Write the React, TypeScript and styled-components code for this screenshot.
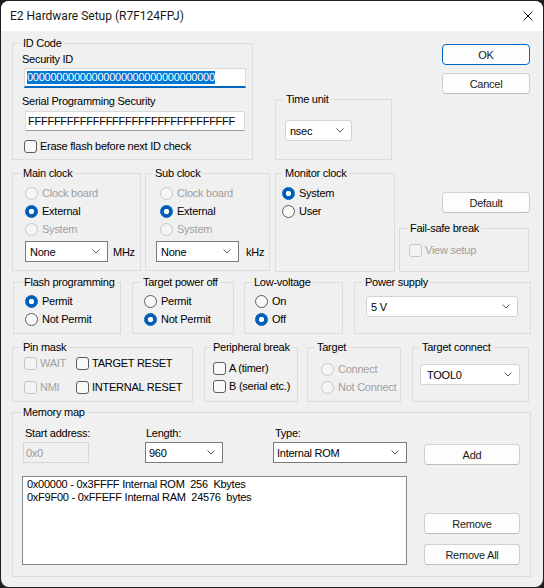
import React from "react"
import styled, { createGlobalStyle } from "styled-components"

const GlobalStyle = createGlobalStyle`
  html, body {
    margin: 0;
    padding: 0;
    background: #1f1f1f;
  }
  #root {
    width: 544px;
    height: 588px;
    overflow: hidden;
  }
`

type Box = { $w?: number; $h?: number; $ml?: number; $mt?: number }

const Window = styled.div`
  margin: 1px 0 0 1px;
  width: 542px;
  height: 586px;
  border-radius: 8px;
  overflow: hidden;
  background: #f0f0f0;
  display: flex;
  flex-direction: column;
  font-family: "Liberation Sans", Arial, sans-serif;
  font-size: 11px;
  line-height: 14px;
  letter-spacing: -0.25px;
  color: #000;
`

const TitleBar = styled.div`
  height: 30px;
  flex: none;
  background: #fff;
  display: flex;
  align-items: center;
  justify-content: space-between;
  padding: 0 10px 0 9px;
`

const Title = styled.span`
  font-family: Roboto, "Liberation Sans", sans-serif;
  font-size: 12px;
  letter-spacing: 0;
  color: #1a1a1a;
`

const Body = styled.div`
  flex: 1;
  display: flex;
  flex-direction: column;
  padding: 12px 0 0 11px;
`

const Row = styled.div<{ $mt?: number }>`
  display: flex;
  align-items: flex-start;
  margin-top: ${p => p.$mt ?? 0}px;
`

const Col = styled.div<Box & { $gap?: number }>`
  display: flex;
  flex-direction: column;
  flex: none;
  gap: ${p => p.$gap ?? 0}px;
  margin-left: ${p => p.$ml ?? 0}px;
  margin-top: ${p => p.$mt ?? 0}px;
  ${p => (p.$w ? `width: ${p.$w}px;` : "")}
`

const Group = styled.div<Box & { $pad: string; $row?: boolean }>`
  position: relative;
  box-sizing: border-box;
  flex: none;
  width: ${p => p.$w}px;
  height: ${p => p.$h}px;
  margin-left: ${p => p.$ml ?? 0}px;
  margin-top: ${p => p.$mt ?? 0}px;
  padding: ${p => p.$pad};
  border: 1px solid #dcdcdc;
  display: flex;
  flex-direction: ${p => (p.$row ? "row" : "column")};
  align-items: flex-start;
`

const Caption = styled.span<{ $at?: number }>`
  position: absolute;
  top: -8px;
  left: ${p => p.$at ?? 8}px;
  padding: 0 2px;
  background: #f0f0f0;
  white-space: nowrap;
`

const Label = styled.span<{ $ml?: number; $mt?: number }>`
  display: block;
  height: 14px;
  white-space: nowrap;
  margin-left: ${p => p.$ml ?? 0}px;
  margin-top: ${p => p.$mt ?? 0}px;
`

const Button = styled.button<Box & { $default?: boolean }>`
  box-sizing: border-box;
  flex: none;
  width: ${p => p.$w ?? 88}px;
  height: ${p => p.$h ?? 21}px;
  margin: ${p => p.$mt ?? 0}px 0 0 ${p => p.$ml ?? 0}px;
  padding: 0;
  border: 1px solid ${p => (p.$default ? "#0067c0" : "#d0d0d0")};
  border-bottom-color: ${p => (p.$default ? "#0067c0" : "#bcbcbc")};
  border-radius: 4px;
  background: #fdfdfd;
  font: inherit;
  letter-spacing: inherit;
  color: #1b1b1b;
`

const TextBox = styled.div<Box & { $focus?: boolean; $disabled?: boolean }>`
  box-sizing: border-box;
  flex: none;
  width: ${p => p.$w}px;
  height: ${p => p.$h ?? 20}px;
  margin: ${p => p.$mt ?? 0}px 0 0 ${p => p.$ml ?? 0}px;
  display: flex;
  align-items: center;
  padding-left: 2px;
  overflow: hidden;
  white-space: nowrap;
  background: ${p => (p.$disabled ? "#f0f0f0" : "#fff")};
  color: ${p => (p.$disabled ? "#9a9a9a" : "#000")};
  border: 1px solid ${p => (p.$disabled ? "#d6d6d6" : "#dadada")};
  border-bottom: ${p =>
    p.$focus ? "2px solid #0067c0" : `1px solid ${p.$disabled ? "#d6d6d6" : "#9a9a9a"}`};
`

const Selection = styled.span`
  background: #0078d7;
  color: #fff;
  line-height: 13px;
`

const Combo = styled.div<Box & { $edit?: boolean; $pl?: number }>`
  box-sizing: border-box;
  flex: none;
  width: ${p => p.$w}px;
  height: ${p => p.$h ?? 21}px;
  margin: ${p => p.$mt ?? 0}px 0 0 ${p => p.$ml ?? 0}px;
  display: flex;
  align-items: center;
  justify-content: space-between;
  padding: 0 7px 0 ${p => p.$pl ?? 3}px;
  background: #fff;
  border: 1px solid ${p => (p.$edit ? "#7a7a7a" : "#d3d3d3")};
  border-radius: ${p => (p.$edit ? 0 : 3)}px;
  white-space: nowrap;
`

const Inline = styled.div<{ $mt?: number; $ml?: number; $gap?: number }>`
  display: flex;
  align-items: center;
  gap: ${p => p.$gap ?? 0}px;
  margin: ${p => p.$mt ?? 0}px 0 0 ${p => p.$ml ?? 0}px;
`

const Option = styled.div<{ $h?: number; $gap?: number; $off?: boolean; $ml?: number; $mt?: number }>`
  display: flex;
  align-items: center;
  height: ${p => p.$h ?? 18}px;
  gap: ${p => p.$gap ?? 4}px;
  margin: ${p => p.$mt ?? 0}px 0 0 ${p => p.$ml ?? 0}px;
  white-space: nowrap;
  color: ${p => (p.$off ? "#a0a0a0" : "#000")};
`

const RadioMark = styled.span<{ $on?: boolean; $off?: boolean }>`
  box-sizing: border-box;
  flex: none;
  width: 13px;
  height: 13px;
  border-radius: 50%;
  border: 1px solid ${p => (p.$on ? "#005fb8" : p.$off ? "#c6c6c6" : "#5c5c5c")};
  background: ${p =>
    p.$on
      ? "radial-gradient(circle, #fff 0 2.4px, #005fb8 3px)"
      : p.$off
      ? "#f5f5f5"
      : "#f9f9f9"};
`

const CheckMark = styled.span<{ $off?: boolean }>`
  box-sizing: border-box;
  flex: none;
  width: 13px;
  height: 13px;
  border-radius: 3px;
  border: 1px solid ${p => (p.$off ? "#c6c6c6" : "#5c5c5c")};
  background: ${p => (p.$off ? "#f3f3f3" : "#f9f9f9")};
`

const CheckGrid = styled.div`
  display: grid;
  grid-template-columns: 52px auto;
  row-gap: 10px;
`

const ListBox = styled.div`
  box-sizing: border-box;
  width: 385px;
  height: 89px;
  margin-top: 13px;
  padding: 1px 4px;
  background: #fff;
  border: 1px solid #828790;
  line-height: 13px;
  white-space: pre;
`

const Chevron = () => (
  <svg width="8" height="5" viewBox="0 0 8 5">
    <path d="M0.5 0.5 L4 4 L7.5 0.5" fill="none" stroke="#5f5f5f" strokeWidth="1" />
  </svg>
)

const CloseIcon = () => (
  <svg width="10" height="10" viewBox="0 0 10 10">
    <path d="M0.5 0.5 L9.5 9.5 M9.5 0.5 L0.5 9.5" stroke="#1a1a1a" strokeWidth="1" />
  </svg>
)

const Radio = ({ label, on, off }: { label: string; on?: boolean; off?: boolean }) => (
  <Option $off={off}>
    <RadioMark $on={on} $off={off} />
    {label}
  </Option>
)

const Check = ({ label, off, ml, mt }: { label: string; off?: boolean; ml?: number; mt?: number }) => (
  <Option $h={14} $gap={3} $off={off} $ml={ml} $mt={mt}>
    <CheckMark $off={off} />
    {label}
  </Option>
)

const Select = (props: { value: string; w: number; edit?: boolean; pl?: number; ml?: number; mt?: number }) => (
  <Combo $w={props.w} $edit={props.edit} $pl={props.pl ?? 4} $ml={props.ml} $mt={props.mt}>
    <span>{props.value}</span>
    <Chevron />
  </Combo>
)

const memory = [
  "0x00000 - 0x3FFFF Internal ROM  256  Kbytes",
  "0xF9F00 - 0xFFEFF Internal RAM  24576  bytes",
]

export default function App() {
  return (
    <>
      <GlobalStyle />
      <Window>
        <TitleBar>
          <Title>E2 Hardware Setup (R7F124FPJ)</Title>
          <CloseIcon />
        </TitleBar>
        <Body>
          <Row>
            <Group $w={241} $h={117} $pad="8px 0 0 9px">
              <Caption>ID Code</Caption>
              <Label>Security ID</Label>
              <TextBox $w={222} $ml={2} $mt={2} $focus>
                <Selection>{"0".repeat(32)}</Selection>
              </TextBox>
              <Label $mt={6}>Serial Programming Security</Label>
              <TextBox $w={220} $ml={3} $mt={3}>
                {"F".repeat(32)}
              </TextBox>
              <Check label="Erase flash before next ID check" ml={2} mt={8} />
            </Group>
            <Group $w={117} $h={61} $ml={22} $mt={56} $pad="20px 0 0 9px">
              <Caption>Time unit</Caption>
              <Select value="nsec" w={67} />
            </Group>
            <Col $ml={50} $mt={1} $gap={8}>
              <Button $default>OK</Button>
              <Button>Cancel</Button>
            </Col>
          </Row>

          <Row $mt={13}>
            <Group $w={129} $h={98} $pad="10px 0 0 12px">
              <Caption $at={8}>Main clock</Caption>
              <Radio label="Clock board" off />
              <Radio label="External" on />
              <Radio label="System" off />
              <Inline $mt={3} $gap={5}>
                <Select value="None" w={83} edit />
                <span>MHz</span>
              </Inline>
            </Group>
            <Group $w={125} $h={98} $ml={4} $pad="10px 0 0 14px">
              <Caption $at={7}>Sub clock</Caption>
              <Radio label="Clock board" off />
              <Radio label="External" on />
              <Radio label="System" off />
              <Inline $mt={3} $ml={-4} $gap={7}>
                <Select value="None" w={83} edit />
                <span>kHz</span>
              </Inline>
            </Group>
            <Group $w={120} $h={99} $ml={5} $pad="10px 0 0 6px">
              <Caption $at={7}>Monitor clock</Caption>
              <Radio label="System" on />
              <Radio label="User" />
            </Group>
            <Col $ml={4} $w={130}>
              <Button $ml={43} $mt={19}>
                Default
              </Button>
              <Group $w={130} $h={44} $mt={15} $pad="14px 0 0 9px">
                <Caption>Fail-safe break</Caption>
                <Check label="View setup" off />
              </Group>
            </Col>
          </Row>

          <Row $mt={10}>
            <Group $w={108} $h={52} $ml={1} $pad="9px 0 0 11px">
              <Caption>Flash programming</Caption>
              <Radio label="Permit" on />
              <Radio label="Not Permit" />
            </Group>
            <Group $w={102} $h={52} $ml={11} $pad="9px 0 0 11px">
              <Caption>Target power off</Caption>
              <Radio label="Permit" />
              <Radio label="Not Permit" on />
            </Group>
            <Group $w={99} $h={52} $ml={10} $pad="9px 0 0 10px">
              <Caption $at={7}>Low-voltage</Caption>
              <Radio label="On" />
              <Radio label="Off" on />
            </Group>
            <Group $w={177} $h={52} $ml={11} $pad="13px 0 0 11px">
              <Caption>Power supply</Caption>
              <Select value="5 V" w={152} />
            </Group>
          </Row>

          <Row $mt={13}>
            <Group $w={181} $h={55} $pad="8px 0 0 11px">
              <Caption>Pin mask</Caption>
              <CheckGrid>
                <Check label="WAIT" off />
                <Check label="TARGET RESET" />
                <Check label="NMI" off />
                <Check label="INTERNAL RESET" />
              </CheckGrid>
            </Group>
            <Group $w={94} $h={55} $ml={11} $pad="13px 0 0 8px">
              <Caption $at={6}>Peripheral break</Caption>
              <Check label="A (timer)" />
              <Check label="B (serial etc.)" mt={4} />
            </Group>
            <Group $w={94} $h={55} $ml={9} $pad="12px 0 0 13px">
              <Caption $at={7}>Target</Caption>
              <Radio label="Connect" off />
              <Radio label="Not Connect" off />
            </Group>
            <Group $w={117} $h={55} $ml={11} $pad="16px 0 0 7px">
              <Caption $at={7}>Target connect</Caption>
              <Select value="TOOL0" w={100} pl={6} />
            </Group>
          </Row>

          <Row $mt={10}>
            <Group $w={519} $h={165} $pad="13px 0 0 9px" $row>
              <Caption>Memory map</Caption>
              <Col $w={385}>
                <Inline>
                  <Col $ml={1} $w={66}>
                    <Label $ml={2}>Start address:</Label>
                    <TextBox $w={66} $h={21} $mt={2} $disabled>
                      0x0
                    </TextBox>
                  </Col>
                  <Col $ml={56} $w={78}>
                    <Label $ml={1}>Length:</Label>
                    <Select value="960" w={78} edit pl={3} mt={2} />
                  </Col>
                  <Col $ml={50} $w={134}>
                    <Label $ml={2}>Type:</Label>
                    <Select value="Internal ROM" w={134} edit pl={3} mt={2} />
                  </Col>
                </Inline>
                <ListBox>{memory.join("\n")}</ListBox>
              </Col>
              <Col $ml={17} $mt={18}>
                <Button $w={96}>Add</Button>
                <Button $w={96} $mt={48}>
                  Remove
                </Button>
                <Button $w={96} $mt={10}>
                  Remove All
                </Button>
              </Col>
            </Group>
          </Row>
        </Body>
      </Window>
    </>
  )
}
